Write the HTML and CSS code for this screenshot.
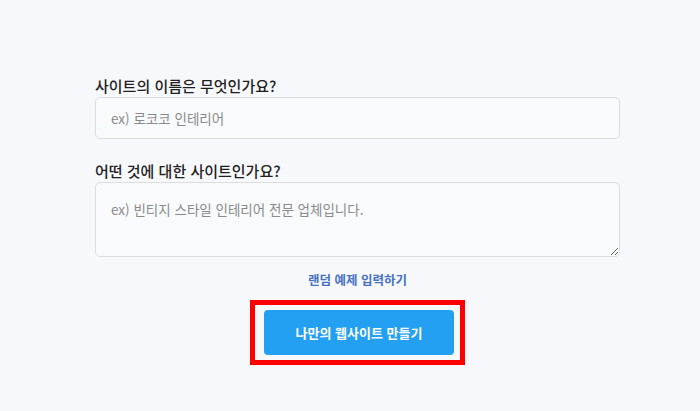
FILE: index.html
```html
<!DOCTYPE html>
<html lang="ko">
<head>
<meta charset="utf-8">
<title>나만의 웹사이트 만들기</title>
<link rel="stylesheet" href="styles.css">
</head>
<body>
<main class="form">
  <label class="label" for="name">사이트의 이름은 무엇인가요?</label>
  <input id="name" class="field" type="text" placeholder="ex) 로코코 인테리어">
  <label class="label label-second" for="desc">어떤 것에 대한 사이트인가요?</label>
  <textarea id="desc" class="field area" placeholder="ex) 빈티지 스타일 인테리어 전문 업체입니다."></textarea>
  <a class="random" href="#">랜덤 예제 입력하기</a>
  <div class="highlight">
    <button class="make" type="button">나만의 웹사이트 만들기</button>
  </div>
</main>
</body>
</html>
```

FILE: styles.css
```css
html, body {
  margin: 0;
  padding: 0;
  background: #f7f8fb;
}
body {
  font-family: "Noto Sans CJK KR", "Noto Sans", sans-serif;
  color: #222;
}
.form {
  width: 525px;
  margin-left: 95px;
  padding-top: 76px;
  display: flex;
  flex-direction: column;
}
.label {
  display: block;
  font-size: 15px;
  line-height: 20px;
  font-weight: 500;
  color: #1f1f1f;
  margin-bottom: 1px;
}
.label-second {
  margin-top: 22px;
}
.field {
  box-sizing: border-box;
  width: 100%;
  height: 42px;
  margin: 0;
  padding: 0 15px;
  border: 1px solid #dcdde1;
  border-radius: 5px;
  background: #f9fafc;
  font-family: "Noto Sans CJK KR", "Noto Sans", sans-serif;
  font-size: 13.5px;
  line-height: 20px;
  color: #333;
  outline: none;
}
.field::placeholder {
  color: #8a8a8a;
}
.area {
  height: 75px;
  padding: 16px 15px;
  resize: vertical;
  display: block;
}
.random {
  align-self: center;
  margin-top: 13px;
  font-size: 12.5px;
  line-height: 20px;
  font-weight: 700;
  color: #4572c4;
  text-decoration: none;
}
.highlight {
  align-self: center;
  margin-top: 10px;
  border: 5px solid #ff0000;
  padding: 5px 6px 5px 9px;
  display: flex;
}
.make {
  width: 190px;
  height: 45px;
  border: none;
  border-radius: 4px;
  background: #24a0f2;
  color: #fff;
  font-family: "Noto Sans CJK KR", "Noto Sans", sans-serif;
  font-size: 13px;
  font-weight: 700;
  cursor: pointer;
}
```
